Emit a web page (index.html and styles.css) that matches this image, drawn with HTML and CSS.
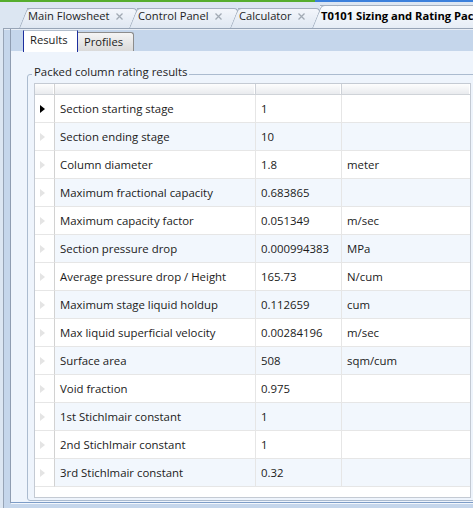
FILE: index.html
```html
<!DOCTYPE html>
<html lang="en">
<head>
  <meta charset="UTF-8" />
  <title>T0101 Sizing and Rating Packed Column</title>
  <link rel="stylesheet" href="styles.css">
</head>
<body>
  <div class="accent">
    <div class="accent-green"></div>
    <div class="accent-blue"></div>
  </div>

  <div class="doc-tabs">
    <div class="doc-tab tab-main">
      <span class="label">Main Flowsheet</span>
      <svg class="close" width="7" height="7" viewBox="0 0 7 7"><path d="M0.5 0.5 L6.5 6.5 M6.5 0.5 L0.5 6.5" /></svg>
    </div>
    <div class="doc-tab tab-control">
      <span class="label">Control Panel</span>
      <svg class="close" width="7" height="7" viewBox="0 0 7 7"><path d="M0.5 0.5 L6.5 6.5 M6.5 0.5 L0.5 6.5" /></svg>
    </div>
    <div class="doc-tab tab-calc">
      <span class="label">Calculator</span>
      <svg class="close" width="7" height="7" viewBox="0 0 7 7"><path d="M0.5 0.5 L6.5 6.5 M6.5 0.5 L0.5 6.5" /></svg>
    </div>
    <div class="doc-tab active">
      <span class="label">T0101 Sizing and Rating Packed Column</span>
    </div>
  </div>

  <div class="doc-frame">
    <div class="tabctl">
      <div class="page-tabs">
        <div class="page-tab selected">Results</div>
        <div class="page-tab">Profiles</div>
      </div>

      <div class="page">
        <fieldset class="group">
          <legend>Packed column rating results</legend>
          <div class="grid">
            <div class="grid-row grid-head">
              <div class="rh"></div><div></div><div></div><div></div>
            </div>
            <div class="grid-row">
              <div class="rh"><span class="arrow current"></span></div>
              <div>Section starting stage</div><div>1</div><div></div>
            </div>
            <div class="grid-row alt">
              <div class="rh"><span class="arrow"></span></div>
              <div>Section ending stage</div><div>10</div><div></div>
            </div>
            <div class="grid-row">
              <div class="rh"><span class="arrow"></span></div>
              <div>Column diameter</div><div>1.8</div><div>meter</div>
            </div>
            <div class="grid-row alt">
              <div class="rh"><span class="arrow"></span></div>
              <div>Maximum fractional capacity</div><div>0.683865</div><div></div>
            </div>
            <div class="grid-row">
              <div class="rh"><span class="arrow"></span></div>
              <div>Maximum capacity factor</div><div>0.051349</div><div>m/sec</div>
            </div>
            <div class="grid-row alt">
              <div class="rh"><span class="arrow"></span></div>
              <div>Section pressure drop</div><div>0.000994383</div><div>MPa</div>
            </div>
            <div class="grid-row">
              <div class="rh"><span class="arrow"></span></div>
              <div>Average pressure drop / Height</div><div>165.73</div><div>N/cum</div>
            </div>
            <div class="grid-row alt">
              <div class="rh"><span class="arrow"></span></div>
              <div>Maximum stage liquid holdup</div><div>0.112659</div><div>cum</div>
            </div>
            <div class="grid-row">
              <div class="rh"><span class="arrow"></span></div>
              <div>Max liquid superficial velocity</div><div>0.00284196</div><div>m/sec</div>
            </div>
            <div class="grid-row alt">
              <div class="rh"><span class="arrow"></span></div>
              <div>Surface area</div><div>508</div><div>sqm/cum</div>
            </div>
            <div class="grid-row">
              <div class="rh"><span class="arrow"></span></div>
              <div>Void fraction</div><div>0.975</div><div></div>
            </div>
            <div class="grid-row alt">
              <div class="rh"><span class="arrow"></span></div>
              <div>1st Stichlmair constant</div><div>1</div><div></div>
            </div>
            <div class="grid-row">
              <div class="rh"><span class="arrow"></span></div>
              <div>2nd Stichlmair constant</div><div>1</div><div></div>
            </div>
            <div class="grid-row alt">
              <div class="rh"><span class="arrow"></span></div>
              <div>3rd Stichlmair constant</div><div>0.32</div><div></div>
            </div>
          </div>
        </fieldset>
      </div>
    </div>
  </div>
</body>
</html>
```

FILE: styles.css
```css
* {
  box-sizing: border-box;
}
body {
  margin: 0;
  width: 473px;
  height: 508px;
  overflow: hidden;
  background-color: #dce6f2;
  font-family: "Open Sans", sans-serif;
  font-size: 11.2px;
  color: #1b1b1b;
}

/* top accent line */
.accent {
  display: flex;
  height: 2px;
}
.accent-green {
  width: 315px;
  background-color: #55ad2e;
}
.accent-blue {
  flex: 1;
  background-color: #3b80dc;
}

/* document tabs */
.doc-tabs {
  display: flex;
  align-items: flex-end;
  height: 26px;
  padding-left: 27px;
  white-space: nowrap;
}
.doc-tab {
  position: relative;
  z-index: 1;
  flex-shrink: 0;
  display: flex;
  align-items: flex-start;
  height: 20px;
  padding: 0 0 0 1px;
  line-height: 12px;
  background: linear-gradient(#f3f6fb, #dfe7f2);
  border-top: 1px solid #a4b0c0;
  border-right: 1px solid #a4b0c0;
  border-top-right-radius: 4px;
  color: #1e1e1e;
}
.doc-tab::before {
  content: "";
  position: absolute;
  z-index: -1;
  top: -1px;
  bottom: 0;
  left: -8px;
  width: 16px;
  background: linear-gradient(#f3f6fb, #dfe7f2);
  border-left: 1px solid #a4b0c0;
  border-top: 1px solid #a4b0c0;
  border-top-left-radius: 4px;
  transform: skewX(-22deg);
  transform-origin: bottom left;
}
.doc-tab .label {
  padding-top: 1px;
}
.tab-main {
  width: 110px;
}
.tab-control {
  width: 101px;
}
.tab-calc {
  width: 82px;
}
.doc-tab.active {
  z-index: 2;
  flex-grow: 1;
  height: 23px;
  padding-top: 3px;
  font-weight: bold;
  color: #000;
  background: linear-gradient(#fafcfe, #e6edf6);
}
.doc-tab.active::before {
  background: linear-gradient(#fafcfe, #e6edf6);
}
.close {
  margin: 4px 0 0 6px;
  fill: none;
  stroke: #a2aab4;
  stroke-width: 1.3;
}

/* frame holding the property tabs */
.doc-frame {
  height: 480px;
  margin-left: 3px;
  padding-left: 6px;
  border-left: 1px solid #97a4b6;
  border-top: 1px solid #97a4b6;
  box-shadow: inset 0 1px #e8eef6;
  background-color: #c5d6eb;
}
.tabctl {
  border-left: 1px solid #8f9db1;
}
.page-tabs {
  display: flex;
  align-items: flex-end;
  height: 22px;
  padding: 1px 0 0 12px;
}
.page-tab {
  width: 56px;
  height: 19px;
  padding: 1px 0 0 6px;
  line-height: 15px;
  background: linear-gradient(#f5f5f5, #dadada);
  border: 1px solid #8c8c8c;
  border-left: none;
  border-bottom: none;
  border-top-right-radius: 3px;
}
.page-tab.selected {
  position: relative;
  z-index: 1;
  width: 55px;
  height: 22px;
  margin-bottom: -1px;
  background: #fff;
  border-top: 1px solid #b3bfcd;
  border-left: 1px solid #1d2f9e;
  border-right: 1px solid #1d2f9e;
  border-radius: 0;
}

.page {
  height: 452px;
  padding: 13px 0 0 16px;
  background-color: #eef4fc;
  border-bottom: 1px solid #7c9cc7;
  box-shadow: 0 1px #f3f7fc;
}

/* group box */
.group {
  margin: 0 -4px 0 0;
  padding: 0 0 2px 4px;
  border: 1px solid #abbbcf;
  border-radius: 3px;
  font-size: 11.4px;
}
.group legend {
  padding: 0 2px 5px;
  line-height: 15px;
  color: #1e1e1e;
}

/* data grid */
.grid {
  width: 437px;
  height: 415px;
  margin: -1px 0 0 2px;
  border: 1px solid #c4cad3;
  background-color: #fff;
}
.grid-row {
  display: grid;
  grid-template-columns: 20px 201px 86px 128px;
  height: 28px;
}
.grid-row > div {
  display: flex;
  align-items: center;
  padding-left: 5px;
  border-right: 1px solid #e6e6e6;
  border-bottom: 1px solid #e6e6e6;
  white-space: nowrap;
}
.grid-row > div:last-child {
  border-right: none;
}
.grid-row > .rh {
  border-right-color: #d2d2d2;
}
.grid-row.alt > div {
  background-color: #f2f7fd;
}
.grid-row.alt > .rh {
  background-color: #fff;
}
.grid-head {
  height: 11px;
}
.grid-head > div {
  background: linear-gradient(#fdfdfd, #e9ebee);
  border-right: 1px solid #cdd1d7;
  border-bottom: 1px solid #cfd3d8;
  box-shadow: inset -1px 0 #fff;
}
.arrow {
  width: 0;
  height: 0;
  border-left: 5px solid #e4e4e4;
  border-top: 4px solid transparent;
  border-bottom: 4px solid transparent;
}
.arrow.current {
  border-left-color: #000;
}
```
